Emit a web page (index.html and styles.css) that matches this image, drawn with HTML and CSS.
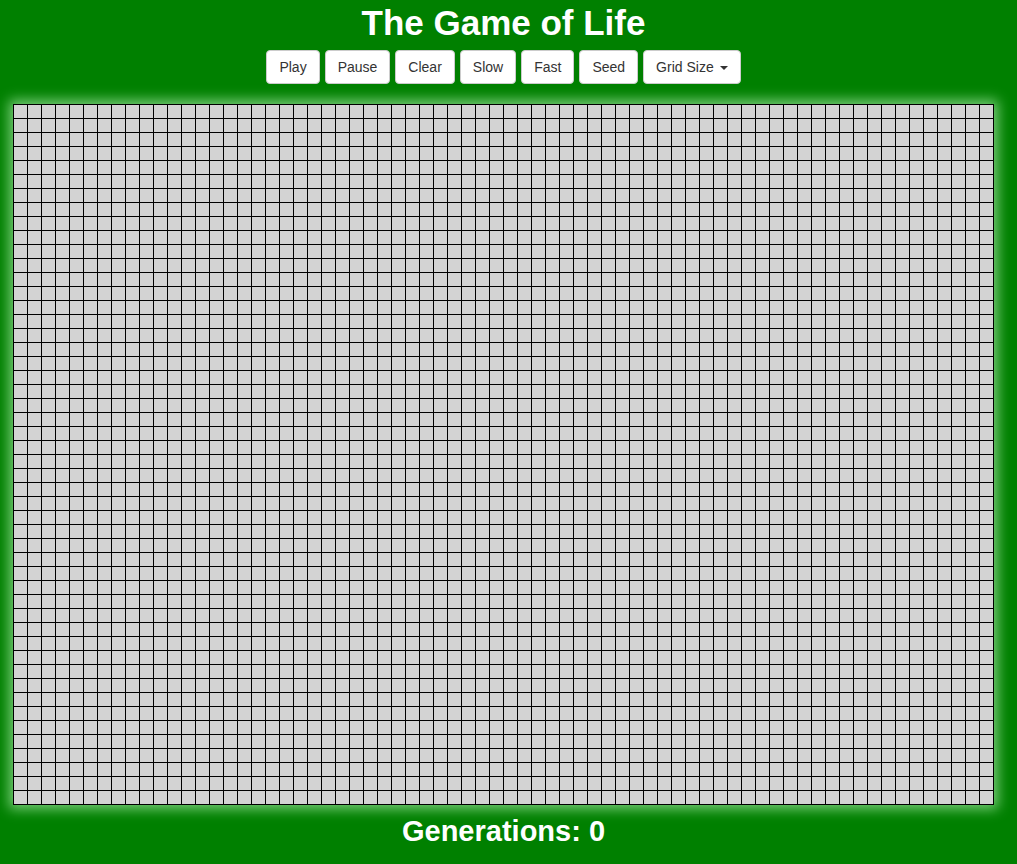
FILE: index.html
```html
<!DOCTYPE html>
<html lang="en">
<head>
<meta charset="utf-8">
<title>The Game of Life</title>
<link rel="stylesheet" href="styles.css">
</head>
<body>
<div class="app">
  <h1 class="title">The Game of Life</h1>
  <div class="controls">
    <button class="btn">Play</button>
    <button class="btn">Pause</button>
    <button class="btn">Clear</button>
    <button class="btn">Slow</button>
    <button class="btn">Fast</button>
    <button class="btn">Seed</button>
    <button class="btn">Grid Size <span class="caret"></span></button>
  </div>
  <div class="board-wrap">
    <div class="board"></div>
  </div>
  <h2 class="generations">Generations: 0</h2>
</div>
</body>
</html>
```

FILE: styles.css
```css
html, body {
  margin: 0;
  padding: 0;
  background: #008000;
}
body {
  font-family: "Liberation Sans", Arial, Helvetica, sans-serif;
  color: #fff;
}
.app {
  width: 1007px;
  text-align: center;
}
.title {
  margin: 0;
  padding-top: 3px;
  font-size: 35px;
  line-height: 39px;
  font-weight: bold;
}
.controls {
  margin-top: 8px;
  display: flex;
  justify-content: center;
  gap: 5px;
}
.btn {
  font-family: inherit;
  font-size: 14px;
  line-height: 20px;
  padding: 6px 12px;
  height: 34px;
  color: #333;
  background: #fff;
  border: 1px solid #ccc;
  border-radius: 4px;
  cursor: pointer;
}
.caret {
  display: inline-block;
  width: 0;
  height: 0;
  margin-left: 2px;
  vertical-align: middle;
  border-top: 4px solid #333;
  border-left: 4px solid transparent;
  border-right: 4px solid transparent;
}
.board-wrap {
  margin-top: 20px;
  display: flex;
  justify-content: center;
}
.board {
  width: 980px;
  height: 700px;
  border-right: 1px solid #000;
  border-bottom: 1px solid #000;
  background-color: #d3d3d3;
  background-image:
    linear-gradient(to right, #000 1px, transparent 1px),
    linear-gradient(to bottom, #000 1px, transparent 1px);
  background-size: 14px 14px;
  box-shadow: 0 0 12px 4px rgba(200, 255, 200, 0.6);
}
.generations {
  margin: 10px 0 0;
  font-size: 29px;
  line-height: 32px;
  font-weight: bold;
}
```
